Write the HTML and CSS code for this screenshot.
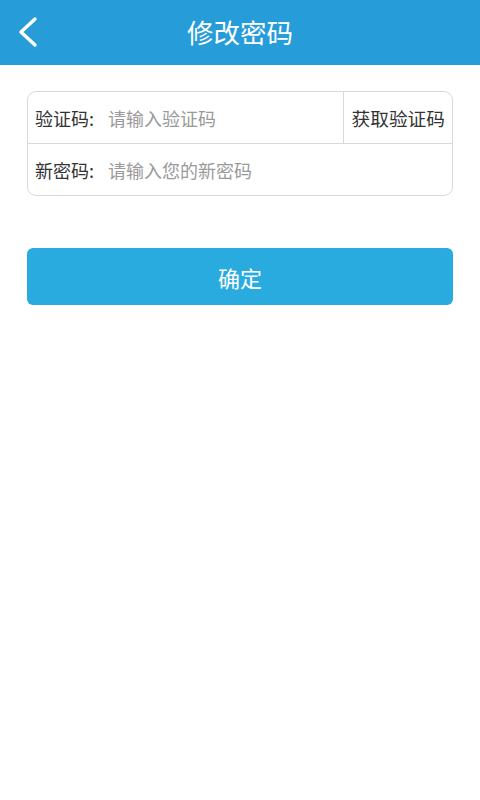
FILE: index.html
```html
<!DOCTYPE html>
<html lang="zh-CN">
<head>
<meta charset="utf-8">
<title>修改密码</title>
<link rel="stylesheet" href="styles.css">
</head>
<body>
<header class="topbar">
  <span class="back">
    <svg width="24" height="32" viewBox="0 0 24 32"><path d="M19 3 L5 16 L19 29" fill="none" stroke="#fff" stroke-width="3.4" stroke-linecap="round" stroke-linejoin="round"/></svg>
  </span>
  <h1 class="title">修改密码</h1>
</header>
<main class="content">
  <div class="card">
    <div class="row">
      <span class="label">验证码:</span>
      <span class="placeholder">请输入验证码</span>
      <span class="getcode">获取验证码</span>
    </div>
    <div class="row">
      <span class="label">新密码:</span>
      <span class="placeholder">请输入您的新密码</span>
    </div>
  </div>
  <div class="btn">确定</div>
</main>
</body>
</html>
```
FILE: styles.css
```css
html, body {
  margin: 0;
  padding: 0;
  background: #fff;
  font-family: "Noto Sans CJK SC", "Noto Sans", sans-serif;
}
.topbar {
  position: relative;
  height: 65px;
  background: #269cd8;
  display: flex;
  align-items: center;
  justify-content: center;
}
.back {
  position: absolute;
  left: 16px;
  top: 16px;
  display: flex;
}
.title {
  margin: 0;
  color: #fff;
  font-size: 26.5px;
  font-weight: normal;
  line-height: 1;
}
.content {
  padding: 26px 27px 0;
}
.card {
  border: 1px solid #d9d9d9;
  border-radius: 9px;
  overflow: hidden;
}
.row {
  height: 51px;
  display: flex;
  align-items: center;
  font-size: 18px;
  color: #333;
}
.row + .row {
  border-top: 1px solid #d9d9d9;
}
.label {
  padding-left: 7px;
  width: 73px;
  flex: none;
}
.placeholder {
  color: #9a9a9a;
  flex: 1;
}
.getcode {
  align-self: stretch;
  display: flex;
  align-items: center;
  border-left: 1px solid #d9d9d9;
  padding: 0 7px 0 8px;
  font-size: 18.7px;
}
.btn {
  margin-top: 52px;
  height: 57px;
  border-radius: 6px;
  background: #29abe0;
  color: #fff;
  font-size: 22px;
  display: flex;
  align-items: center;
  justify-content: center;
}
```
